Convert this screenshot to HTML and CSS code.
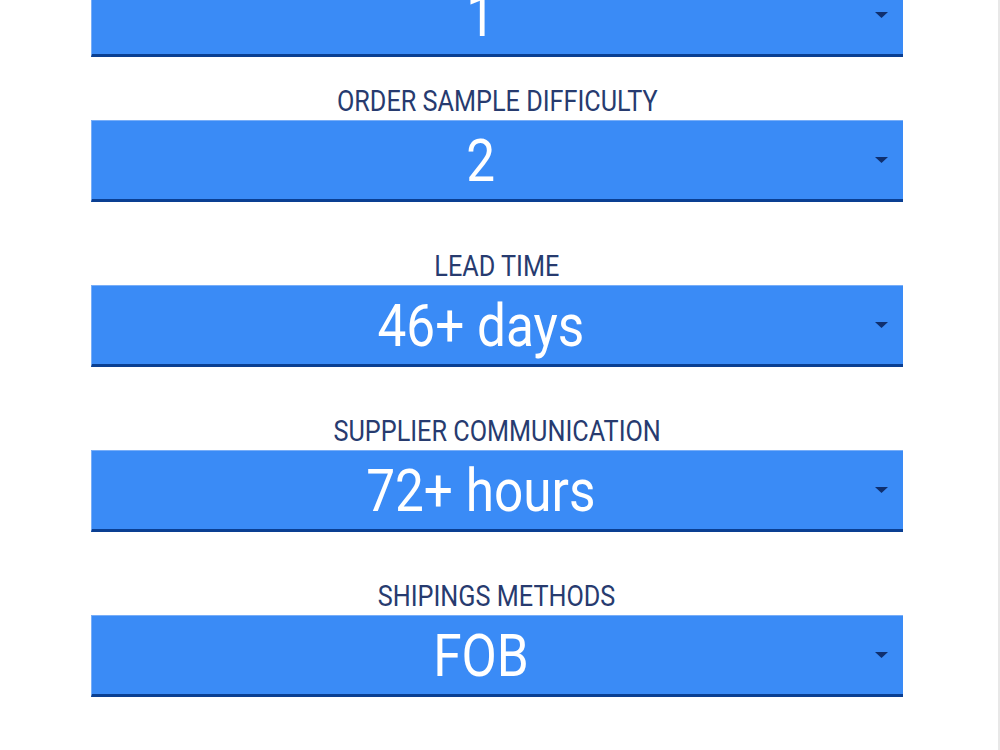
FILE: index.html
```html
<!DOCTYPE html>
<html lang="en">
<head>
    <meta charset="UTF-8">
    <meta name="viewport" content="width=device-width, initial-scale=1.0">
    <title>Supplier Rating</title>
    <link rel="stylesheet" href="styles.css">
</head>
<body>
    <div class="page">
        <div class="rating-form">
            <div class="field field-first">
                <div class="dropdown">
                    <div class="dropdown-value"><span>1</span></div>
                    <div class="dropdown-arrow">
                        <svg width="13" height="6" viewBox="0 0 13 6"><path d="M0 0h13L6.5 6z"/></svg>
                    </div>
                </div>
            </div>

            <div class="field field-second">
                <div class="field-label"><span>ORDER SAMPLE DIFFICULTY</span></div>
                <div class="dropdown">
                    <div class="dropdown-value"><span>2</span></div>
                    <div class="dropdown-arrow">
                        <svg width="13" height="6" viewBox="0 0 13 6"><path d="M0 0h13L6.5 6z"/></svg>
                    </div>
                </div>
            </div>

            <div class="field">
                <div class="field-label"><span>LEAD TIME</span></div>
                <div class="dropdown">
                    <div class="dropdown-value"><span>46+ days</span></div>
                    <div class="dropdown-arrow">
                        <svg width="13" height="6" viewBox="0 0 13 6"><path d="M0 0h13L6.5 6z"/></svg>
                    </div>
                </div>
            </div>

            <div class="field">
                <div class="field-label"><span>SUPPLIER COMMUNICATION</span></div>
                <div class="dropdown">
                    <div class="dropdown-value"><span>72+ hours</span></div>
                    <div class="dropdown-arrow">
                        <svg width="13" height="6" viewBox="0 0 13 6"><path d="M0 0h13L6.5 6z"/></svg>
                    </div>
                </div>
            </div>

            <div class="field">
                <div class="field-label"><span>SHIPINGS METHODS</span></div>
                <div class="dropdown">
                    <div class="dropdown-value"><span>FOB</span></div>
                    <div class="dropdown-arrow">
                        <svg width="13" height="6" viewBox="0 0 13 6"><path d="M0 0h13L6.5 6z"/></svg>
                    </div>
                </div>
            </div>
        </div>
    </div>
</body>
</html>
```

FILE: styles.css
```css
html, body {
    margin: 0;
    padding: 0;
    background-color: #fff;
    overflow: hidden;
}

body {
    font-family: Roboto, "Noto Sans", sans-serif;
}

.page {
    display: flow-root;
    width: 1000px;
    height: 750px;
    box-sizing: border-box;
    padding-right: 4px;
    border-right: 2px solid #e8e8e8;
}

.rating-form {
    width: 812px;
    margin: 0 auto;
}

.field {
    margin-top: 49px;
}

/* list is scrolled, the first field is cut off at the top */
.field-first {
    margin-top: -25px;
}

.field-second {
    margin-top: 29px;
}

.field-label {
    height: 30px;
    line-height: 30px;
    margin-bottom: 4px;
    text-align: center;
    font-size: 29px;
    color: #273b6f;
    white-space: nowrap;
}

.field-label span {
    display: inline-block;
    transform: scaleX(0.87);
}

.dropdown {
    display: flex;
    align-items: center;
    height: 82px;
    box-sizing: border-box;
    background-color: #3a8bf6;
    border-top: 1px solid #78aef8;
    border-left: 1px solid #78aef8;
    border-bottom: 3px solid #0a3f92;
}

.dropdown-value {
    flex: 1;
    text-align: center;
    font-size: 59px;
    line-height: 1;
    color: #fff;
    white-space: nowrap;
}

.dropdown-value span {
    display: inline-block;
    transform: scaleX(0.87);
}

.dropdown-arrow {
    width: 24px;
    margin-right: 10px;
    display: flex;
    justify-content: center;
}

.dropdown-arrow svg {
    display: block;
    fill: #0f2f6e;
}
```
